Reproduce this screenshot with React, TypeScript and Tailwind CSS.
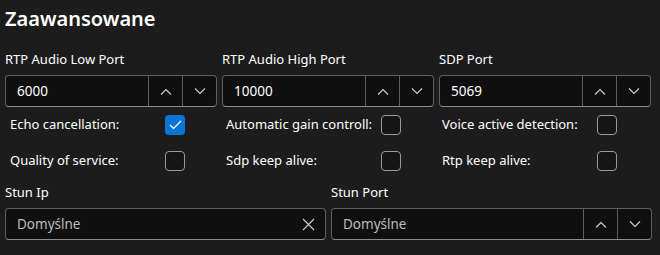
import React from "react";

const font = { fontFamily: '"Segoe UI", "Noto Sans", "Open Sans", sans-serif' };

function ChevronUp() {
  return (
    <svg width="12" height="7" viewBox="0 0 12 7" fill="none">
      <path d="M1 6.5 L6 1.5 L11 6.5" stroke="#d0d0d0" strokeWidth="1.1" />
    </svg>
  );
}
function ChevronDown() {
  return (
    <svg width="12" height="7" viewBox="0 0 12 7" fill="none">
      <path d="M1 0.5 L6 5.5 L11 0.5" stroke="#d0d0d0" strokeWidth="1.1" />
    </svg>
  );
}

function SpinBox({ value, muted }: { value: string; muted?: boolean }) {
  return (
    <div className="flex h-[32px] rounded-[4px] border border-[#5e5e5e] border-b-[#8c8c8c] bg-[#0f0f0f]">
      <div className={`flex-1 flex items-center pl-[11px] text-[13.5px] ${muted ? "text-[#bdbdbd]" : "text-white"}`}>{value}</div>
      <div className="w-[34px] border-l border-[#5e5e5e] flex items-center justify-center">
        <ChevronUp />
      </div>
      <div className="w-[34px] border-l border-[#5e5e5e] flex items-center justify-center">
        <ChevronDown />
      </div>
    </div>
  );
}

function Field({ label, children }: { label: string; children: React.ReactNode }) {
  return (
    <div className="flex flex-col">
      <div className="text-[13px] text-white h-[20px] leading-[20px] mb-[6px]">{label}</div>
      {children}
    </div>
  );
}

function Check({ checked }: { checked?: boolean }) {
  if (checked)
    return (
      <div className="w-[20px] h-[20px] rounded-[4px] bg-[#0a74d6] flex items-center justify-center">
        <svg width="13" height="10" viewBox="0 0 13 10" fill="none">
          <path d="M1 5 L4.5 8.5 L12 1" stroke="white" strokeWidth="1.2" />
        </svg>
      </div>
    );
  return <div className="w-[20px] h-[20px] rounded-[4px] border border-[#9a9a9a] bg-[#151515]" />;
}

function CheckItem({ label, checked }: { label: string; checked?: boolean }) {
  return (
    <div className="flex items-center h-[20px]">
      <div className="w-[155px] text-[13px] text-white whitespace-nowrap">{label}</div>
      <Check checked={checked} />
    </div>
  );
}

export default function App() {
  return (
    <div className="w-[660px] h-[255px] bg-[#1c1c1c] overflow-hidden" style={font}>
      <div className="pl-[5px] pt-[5px] text-[20px] font-semibold text-white leading-[28px]">Zaawansowane</div>
      <div className="grid grid-cols-3 gap-x-[5px] pl-[5px] pr-[9px] mt-[16px]">
        <Field label="RTP Audio Low Port"><SpinBox value="6000" /></Field>
        <Field label="RTP Audio High Port"><SpinBox value="10000" /></Field>
        <Field label="SDP Port"><SpinBox value="5069" /></Field>
      </div>
      <div className="grid grid-cols-[216px_216px_216px] gap-y-[16px] pl-[10px] mt-[8px]">
        <CheckItem label="Echo cancellation:" checked />
        <CheckItem label="Automatic gain controll:" />
        <CheckItem label="Voice active detection:" />
        <CheckItem label="Quality of service:" />
        <CheckItem label="Sdp keep alive:" />
        <CheckItem label="Rtp keep alive:" />
      </div>
      <div className="grid grid-cols-2 gap-x-[5px] pl-[5px] pr-[8px] mt-[11px]">
        <Field label="Stun Ip">
          <div className="flex h-[32px] rounded-[4px] border border-[#5e5e5e] border-b-[#8c8c8c] bg-[#0f0f0f]">
            <div className="flex-1 flex items-center pl-[11px] text-[13.5px] text-[#bdbdbd]">Domyślne</div>
            <div className="w-[34px] flex items-center justify-center">
              <svg width="13" height="13" viewBox="0 0 13 13" fill="none">
                <path d="M1 1 L12 12 M12 1 L1 12" stroke="#d0d0d0" strokeWidth="1.1" />
              </svg>
            </div>
          </div>
        </Field>
        <Field label="Stun Port"><SpinBox value="Domyślne" muted /></Field>
      </div>
    </div>
  );
}
